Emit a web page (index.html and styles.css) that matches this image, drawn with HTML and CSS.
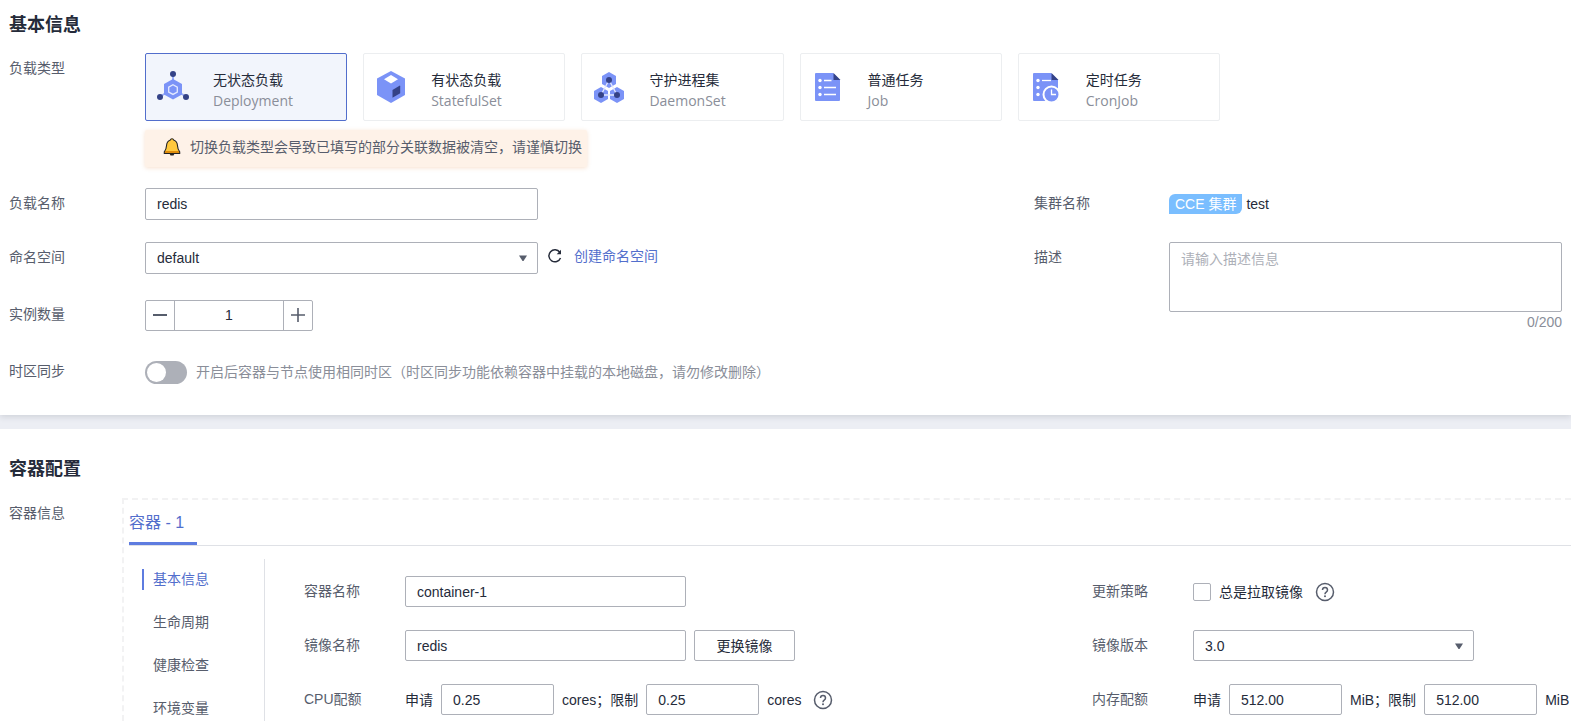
FILE: index.html
```html
<!DOCTYPE html>
<html lang="zh-CN">
<head>
<meta charset="utf-8">
<meta name="viewport" content="width=device-width, initial-scale=1">
<title>创建工作负载</title>
<link rel="stylesheet" href="styles.css">
</head>
<body>
<main class="page">
  <section class="panel panel-basic">
    <h2 class="panel-title">基本信息</h2>
    <div class="row row-types">
      <span class="label" id="type-label">负载类型</span>
      <div class="types">
        <div class="cards" role="radiogroup" aria-labelledby="type-label">
          <label class="card">
            <input class="card-radio" type="radio" name="type" checked>
            <svg class="card-icon" viewBox="0 0 32 32" aria-hidden="true">
              <path d="M16 4v8M4 25l8-5M28 25l-8-5" stroke="#9aaefa" stroke-width="2" fill="none"/>
              <path d="M16 8l9 5v10.500l-9 5-9-5V13z" fill="#7b93f7"/>
              <path d="M16 13.700l4.300 2.400v4.900L16 23.400 11.700 21v-4.900z" fill="#7b93f7" stroke="#e4eaff" stroke-width="1.300"/>
              <circle cx="16" cy="3" r="3" fill="#344287"/><circle cx="3" cy="26" r="3" fill="#344287"/><circle cx="29" cy="26" r="3" fill="#344287"/>
            </svg>
            <span class="card-text"><span class="card-name">无状态负载</span><span class="card-kind">Deployment</span></span>
          </label>
          <label class="card">
            <input class="card-radio" type="radio" name="type">
            <svg class="card-icon" viewBox="0 0 32 32" aria-hidden="true">
              <path d="M16 0l14 7.500v16.500l-14 8-14-8V7.500z" fill="#7b93f7"/>
              <path d="M16 4l7 4.200-7 4.300-7-4.300z" fill="#fff"/>
              <path d="M17.500 19l7-4.300q.7-.3.7.5v7l-7.700 4.500z" fill="#344287"/>
            </svg>
            <span class="card-text"><span class="card-name">有状态负载</span><span class="card-kind">StatefulSet</span></span>
          </label>
          <label class="card">
            <input class="card-radio" type="radio" name="type">
            <svg class="card-icon" viewBox="0 0 32 32" aria-hidden="true">
              <path d="M16 1l7 4v8l-7 4-7-4V5zM8 16l7 4v8l-7 4-7-4v-8zM24 16l7 4v8l-7 4-7-4v-8z" fill="#7b93f7"/>
              <path d="M16 9L8 24h16z" fill="none" stroke="#e4eaff" stroke-width="1.300"/>
              <circle cx="16" cy="9" r="3" fill="#344287"/><circle cx="8" cy="24" r="3" fill="#344287"/><circle cx="24" cy="24" r="3" fill="#344287"/>
            </svg>
            <span class="card-text"><span class="card-name">守护进程集</span><span class="card-kind">DaemonSet</span></span>
          </label>
          <label class="card">
            <input class="card-radio" type="radio" name="type">
            <svg class="card-icon" viewBox="0 0 32 32" aria-hidden="true">
              <path d="M4 2h17l7 7v20q0 1-1 1H4q-1 0-1-1V3q0-1 1-1z" fill="#7b93f7"/>
              <path d="M21.500 2l7 7h-7z" fill="#344287"/>
              <path d="M12 9.500h7.500M12 16.500h12M12 23.500h12" stroke="#fff" stroke-width="1.300"/>
              <circle cx="8" cy="9.500" r="1.700" fill="#fff"/><circle cx="8" cy="16.500" r="1.700" fill="#fff"/><circle cx="8" cy="23.500" r="1.700" fill="#fff"/>
            </svg>
            <span class="card-text"><span class="card-name">普通任务</span><span class="card-kind">Job</span></span>
          </label>
          <label class="card">
            <input class="card-radio" type="radio" name="type">
            <svg class="card-icon" viewBox="0 0 32 32" aria-hidden="true">
              <path d="M4 2h17l7 7v20q0 1-1 1H4q-1 0-1-1V3q0-1 1-1z" fill="#7b93f7"/>
              <path d="M21.500 2l7 7h-7z" fill="#344287"/>
              <path d="M12 9.500h9" stroke="#fff" stroke-width="1.300"/>
              <circle cx="8" cy="9.500" r="1.700" fill="#fff"/><circle cx="8" cy="16.500" r="1.700" fill="#fff"/><circle cx="8" cy="23.500" r="1.700" fill="#fff"/>
              <circle cx="21.500" cy="23.500" r="8" fill="#7b93f7" stroke="#fff" stroke-width="2"/>
              <path d="M21.500 18.500v5h4.500" fill="none" stroke="#fff" stroke-width="1.300"/>
            </svg>
            <span class="card-text"><span class="card-name">定时任务</span><span class="card-kind">CronJob</span></span>
          </label>
        </div>
        <p class="notice">
          <svg class="bell" viewBox="0 0 18 18" aria-hidden="true">
            <path d="M6.500 15.500h5l-1 2h-3z" fill="#222"/>
            <path d="M9 .800c1 0 1.500.6 1.700 1.300 2.600.9 3.600 3 3.800 5.700.2 3 .7 4.500 2.200 6v1.700H1.300v-1.700c1.500-1.500 2-3 2.200-6 .2-2.700 1.200-4.800 3.800-5.700C7.500 1.400 8 .8 9 .8z" fill="#ffc83d" stroke="#222" stroke-width="1.100"/>
            <path d="M2 14h14" stroke="#d67d00" stroke-width="1.600"/>
          </svg>
          <span>切换负载类型会导致已填写的部分关联数据被清空，请谨慎切换</span>
        </p>
      </div>
    </div>

    <div class="columns">
      <div class="column">
        <div class="row">
          <label class="label" for="name">负载名称</label>
          <div class="control"><input class="field field-wide" id="name" type="text" value="redis"></div>
        </div>
        <div class="row">
          <label class="label" for="namespace">命名空间</label>
          <div class="control">
            <span class="select field-wide">
              <select class="field" id="namespace"><option>default</option></select>
              <svg class="caret" viewBox="0 0 8 6" aria-hidden="true"><path d="M0 .5h8L4.500 6h-1z" fill="#575d6c"/></svg>
            </span>
            <button class="icon-button" type="button" aria-label="刷新">
              <svg class="refresh" viewBox="0 0 14 14" aria-hidden="true"><path d="M12.500 9A6 6 0 1 1 11.800 3.300" fill="none" stroke="#252b3a" stroke-width="1.500"/><path d="M13 .8v4.400H8.700z" fill="#252b3a"/></svg>
            </button>
            <a class="link" href="#namespace">创建命名空间</a>
          </div>
        </div>
        <div class="row row-loose">
          <label class="label" for="replicas">实例数量</label>
          <div class="control">
            <div class="stepper">
              <button class="step" type="button" aria-label="减少"><svg class="step-icon" viewBox="0 0 14 14"><path d="M0 7h14" stroke="#575d6c" stroke-width="2"/></svg></button>
              <input class="step-value" id="replicas" type="text" value="1">
              <button class="step" type="button" aria-label="增加"><svg class="step-icon" viewBox="0 0 14 14"><path d="M0 7h14M7 0v14" stroke="#575d6c" stroke-width="1.600"/></svg></button>
            </div>
          </div>
        </div>
        <div class="row row-loose">
          <label class="label" for="timezone">时区同步</label>
          <div class="control">
            <input class="switch" id="timezone" type="checkbox" role="switch">
            <span class="hint">开启后容器与节点使用相同时区（时区同步功能依赖容器中挂载的本地磁盘，请勿修改删除）</span>
          </div>
        </div>
      </div>
      <div class="column">
        <div class="row">
          <span class="label">集群名称</span>
          <div class="control cluster"><span class="tag">CCE 集群</span><span>test</span></div>
        </div>
        <div class="row">
          <label class="label" for="description">描述</label>
          <div class="description">
            <textarea class="field area" id="description" placeholder="请输入描述信息"></textarea>
            <span class="count">0/200</span>
          </div>
        </div>
      </div>
    </div>
  </section>

  <section class="panel panel-container">
    <h2 class="panel-title">容器配置</h2>
    <div class="container-row">
      <span class="label">容器信息</span>
      <div class="container-box">
        <div class="tabs" role="tablist"><button class="tab" type="button" role="tab" aria-selected="true">容器 - 1</button></div>
        <div class="container-body">
          <nav class="side">
            <a class="side-item side-item-active" href="#container-name">基本信息</a>
            <a class="side-item" href="#lifecycle">生命周期</a>
            <a class="side-item" href="#health">健康检查</a>
            <a class="side-item" href="#env">环境变量</a>
          </nav>
          <div class="form">
            <div class="row">
              <label class="label" for="container-name">容器名称</label>
              <div class="control"><input class="field field-mid" id="container-name" type="text" value="container-1"></div>
            </div>
            <div class="row">
              <span class="label">更新策略</span>
              <div class="control">
                <input class="check" id="always-pull" type="checkbox">
                <label for="always-pull">总是拉取镜像</label>
                <svg class="help" viewBox="0 0 20 20" role="img" aria-label="帮助"><circle cx="10" cy="10" r="8.500" fill="none" stroke="#575d6c" stroke-width="1.500"/><path d="M7.500 8q0-2.600 2.500-2.600T12.500 8q0 1.200-1.300 2.100T10 12.200" fill="none" stroke="#575d6c" stroke-width="1.500"/><circle cx="10" cy="14.300" r="1" fill="#575d6c"/></svg>
              </div>
            </div>
            <div class="row">
              <label class="label" for="image">镜像名称</label>
              <div class="control"><input class="field field-mid" id="image" type="text" value="redis"><button class="button" type="button">更换镜像</button></div>
            </div>
            <div class="row">
              <label class="label" for="version">镜像版本</label>
              <div class="control">
                <span class="select field-mid">
                  <select class="field" id="version"><option>3.0</option></select>
                  <svg class="caret" viewBox="0 0 8 6" aria-hidden="true"><path d="M0 .5h8L4.500 6h-1z" fill="#575d6c"/></svg>
                </span>
              </div>
            </div>
            <div class="row">
              <span class="label">CPU配额</span>
              <div class="control">
                <label for="cpu-request">申请</label>
                <input class="field field-small" id="cpu-request" type="text" value="0.25">
                <label for="cpu-limit">cores；限制</label>
                <input class="field field-small" id="cpu-limit" type="text" value="0.25">
                <span>cores</span>
                <svg class="help" viewBox="0 0 20 20" role="img" aria-label="帮助"><circle cx="10" cy="10" r="8.500" fill="none" stroke="#575d6c" stroke-width="1.500"/><path d="M7.500 8q0-2.600 2.500-2.600T12.500 8q0 1.200-1.300 2.100T10 12.200" fill="none" stroke="#575d6c" stroke-width="1.500"/><circle cx="10" cy="14.300" r="1" fill="#575d6c"/></svg>
              </div>
            </div>
            <div class="row">
              <span class="label">内存配额</span>
              <div class="control">
                <label for="mem-request">申请</label>
                <input class="field field-small" id="mem-request" type="text" value="512.00">
                <label for="mem-limit">MiB；限制</label>
                <input class="field field-small" id="mem-limit" type="text" value="512.00">
                <span>MiB</span>
              </div>
            </div>
          </div>
        </div>
      </div>
    </div>
  </section>
</main>
</body>
</html>
```
FILE: styles.css
```css
* { box-sizing: border-box; }

body {
  margin: 0;
  overflow-x: hidden;
  background: #eceef4;
  color: #252b3a;
  font: 14px/20px "Liberation Sans", "Noto Sans CJK SC", sans-serif;
}

input, select, textarea, button { margin: 0; font: inherit; color: inherit; }

.page {
  display: flex;
  flex-direction: column;
  gap: 14px;
  min-height: 100vh;
}

.panel {
  padding: 13px 9px 0;
  background: #fff;
}
.panel-basic {
  padding-bottom: 27px;
  box-shadow: 0 2px 6px rgba(37, 43, 58, 0.14);
}
.panel-container {
  display: flex;
  flex: 1;
  flex-direction: column;
  padding-top: 28px;
  padding-right: 0;
}
.panel-title { margin: 0; font-size: 18px; line-height: 24px; font-weight: 700; }

.row { display: flex; }
.label {
  flex: none;
  width: 136px;
  padding-top: 5px;
  color: #575d6c;
  white-space: nowrap;
}
.control {
  display: flex;
  align-items: center;
  min-height: 32px;
  white-space: nowrap;
}

.row-types { margin-top: 16px; }
.types { flex: 1; min-width: 0; }
.cards {
  display: grid;
  grid-template-columns: repeat(5, 1fr);
  gap: 16px;
  max-width: 1075px;
}
.card {
  position: relative;
  display: flex;
  align-items: center;
  gap: 24px;
  height: 68px;
  padding: 0 11px;
  border: 1px solid #eceef0;
  border-radius: 2px;
  cursor: pointer;
}
.card:has(:checked) { border-color: #526ecc; background: #f2f5fc; }
.card-radio { position: absolute; opacity: 0; }
.card-icon { width: 32px; height: 32px; flex: none; }
.card-text { display: flex; flex-direction: column; gap: 1px; padding-top: 6px; }
.card-kind { color: #8a8e99; font-family: "Open Sans", sans-serif; }

.notice {
  display: flex;
  align-items: center;
  gap: 9px;
  width: fit-content;
  height: 37px;
  margin: 9px 0 0;
  padding: 0 5px 4px 18px;
  border-radius: 2px;
  background: #fef2e8;
  color: #575d6c;
  box-shadow: 0 1px 4px rgba(225, 130, 60, 0.25);
}
.bell { width: 18px; height: 18px; }

.columns {
  display: grid;
  grid-template-columns: minmax(0, 1fr) 34%;
  margin-top: 21px;
}
.column .row + .row { margin-top: 22px; }
.column .row + .row-loose { margin-top: 25px; }
.row-loose .control { min-height: 32px; }

.field {
  width: 100%;
  height: 32px;
  padding: 0 11px;
  border: 1px solid #adb0b8;
  border-radius: 2px;
  background: #fff;
  appearance: none;
}
.field-wide { width: 393px; }
.select { position: relative; display: flex; }
.caret {
  position: absolute;
  top: 50%;
  right: 11px;
  width: 8px;
  height: 6px;
  margin-top: -3px;
  pointer-events: none;
}

.icon-button {
  display: flex;
  margin: 0 12px 0 10px;
  padding: 0 0 5px;
  border: 0;
  background: none;
}
.refresh { width: 14px; height: 14px; }
.link { padding-bottom: 4px; color: #526ecc; text-decoration: none; }

.stepper {
  display: flex;
  height: 31px;
  border: 1px solid #adb0b8;
  border-radius: 2px;
}
.step {
  display: flex;
  align-items: center;
  justify-content: center;
  width: 28px;
  padding: 0;
  border: 0;
  background: none;
}
.step-icon { width: 14px; height: 14px; }
.step-value {
  width: 110px;
  padding: 0;
  border: solid #adb0b8;
  border-width: 0 1px;
  text-align: center;
}

.switch {
  flex: none;
  width: 42px;
  height: 23px;
  margin-right: 9px;
  padding: 2px;
  border-radius: 12px;
  background: #adb0b8;
  appearance: none;
}
.switch::before {
  content: "";
  display: block;
  width: 19px;
  height: 19px;
  border-radius: 50%;
  background: #fff;
}
.hint { color: #8a8e99; }

.cluster { gap: 4px; }
.tag {
  padding: 0 6px;
  border-radius: 6px 0;
  background: #7abeff;
  color: #fff;
}
.columns .column:last-child .label { width: 135px; }
.description { display: flex; flex: 1; flex-direction: column; }
.area { display: block; height: 70px; padding: 6px 11px; resize: none; }
.area::placeholder { color: #adb0b8; }
.count { align-self: flex-end; color: #8a8e99; }

.container-row { display: flex; flex: 1; margin-top: 17px; }
.container-row > .label { width: 113px; }
.container-box {
  display: flex;
  flex: 1;
  flex-direction: column;
  min-width: 0;
  padding-left: 5px;
  border: dashed #f2f2f3;
  border-width: 2px 0 0 2px;
}
.tabs { display: flex; border-bottom: 1px solid #dfe1e6; }
.tab {
  height: 45px;
  padding: 4px 13px 0 0;
  border: 0;
  border-bottom: 3px solid #5e7ce0;
  background: none;
  color: #526ecc;
  font-size: 16px;
}
.container-body { display: flex; flex: 1; padding-top: 13px; }
.side {
  display: flex;
  flex: none;
  flex-direction: column;
  gap: 22px;
  width: 136px;
  padding: 10px 0 0 13px;
  border-right: 1px solid #dfe1e6;
}
.side-item {
  height: 21px;
  padding-left: 9px;
  border-left: 2px solid transparent;
  color: #575d6c;
  text-decoration: none;
}
.side-item-active { border-color: #5e7ce0; color: #526ecc; }

.form {
  display: grid;
  flex: 1;
  grid-template-columns: 1fr 479px;
  align-content: start;
  row-gap: 23px;
  padding: 17px 0 0 39px;
}
.form .label { width: 101px; }
.form .control { gap: 8px; min-height: 31px; }
.form .field { height: 31px; }
.form .field-mid { width: 281px; }
.form .field-small { width: 113px; }
.button {
  width: 101px;
  height: 31px;
  padding: 0;
  border: 1px solid #adb0b8;
  border-radius: 2px;
  background: #fff;
}
.check {
  width: 18px;
  height: 18px;
  border: 1px solid #adb0b8;
  border-radius: 2px;
  background: #fff;
  appearance: none;
}
.help { width: 20px; height: 20px; margin-left: 4px; }
```
